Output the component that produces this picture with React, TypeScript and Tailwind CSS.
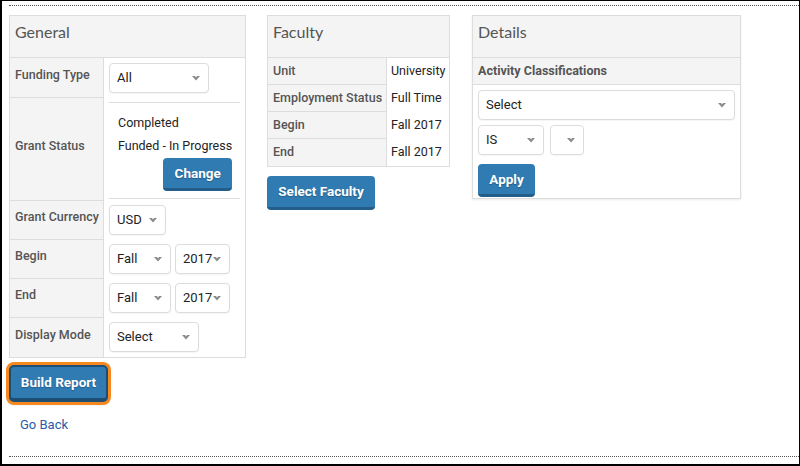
import * as React from "react";

const labelCls =
	"bg-[#f4f4f4] border-r border-[#ddd] pl-[5px] pb-[5px] flex items-center text-[12.5px] font-medium text-[#555]";

function Arrow() {
	return (
		<svg width="8" height="5" viewBox="0 0 8 5" className="shrink-0">
			<path d="M0 0 L4 4.5 L8 0 L5 0 L4 1.5 L3 0 Z" fill="#8a8a8a" />
		</svg>
	);
}

function Select({ label, className }: { label?: string; className: string }) {
	return (
		<div
			className={`flex items-center justify-between h-[30px] border border-[#dcdcdc] rounded-[4px] bg-white pl-[7px] pr-[8px] text-[13px] text-[#222] shadow-[0_1px_1px_rgba(0,0,0,0.04)] ${className}`}
		>
			<span>{label ?? ""}</span>
			<Arrow />
		</div>
	);
}

function BlueButton({ children, className }: { children: React.ReactNode; className: string }) {
	return (
		<button
			className={`bg-[#2f7bb2] border-b-[3px] border-[#235e8a] rounded-[4px] text-white font-bold text-[13.5px] [text-shadow:0_1px_1px_rgba(0,0,0,0.25)] flex items-center justify-center ${className}`}
		>
			{children}
		</button>
	);
}

function PanelHeader({ title }: { title: string }) {
	return (
		<div className="h-[42px] bg-[#f4f4f4] border-b border-[#ddd] pl-[5px] pt-[4px] text-[16px] text-[#555] font-['Lato',sans-serif]">
			{title}
		</div>
	);
}

function GeneralPanel() {
	return (
		<div className="w-[237px] border border-[#ddd] bg-white">
			<PanelHeader title="General" />
			<div className="grid grid-cols-[94px_1fr]">
				<div className={`${labelCls} h-[40px] border-b`}>Funding Type</div>
				<div className="pt-[5px] pl-[5px]">
					<Select label="All" className="w-[100px]" />
				</div>

				<div className={`${labelCls} h-[103px] border-b`}>Grant Status</div>
				<div className="pt-[4px] px-[5px]">
					<div className="border-y border-[#ddd] pt-[8px] pb-[7px] pl-[9px] pr-[8px] text-[12.5px] text-[#222] whitespace-nowrap">
						<div className="leading-[23px]">Completed</div>
						<div className="leading-[23px]">Funded - In Progress</div>
						<div className="flex justify-end mt-[1px]">
							<BlueButton className="w-[69px] h-[33px]">Change</BlueButton>
						</div>
					</div>
				</div>

				<div className={`${labelCls} h-[39px] border-b`}>Grant Currency</div>
				<div className="pt-[4px] pl-[5px]">
					<Select label="USD" className="w-[57px]" />
				</div>

				<div className={`${labelCls} h-[39px] border-b`}>Begin</div>
				<div className="pt-[4px] pl-[5px] flex gap-[4px]">
					<Select label="Fall" className="w-[62px]" />
					<Select label="2017" className="w-[55px]" />
				</div>

				<div className={`${labelCls} h-[39px] border-b`}>End</div>
				<div className="pt-[4px] pl-[5px] flex gap-[4px]">
					<Select label="Fall" className="w-[62px]" />
					<Select label="2017" className="w-[55px]" />
				</div>

				<div className={`${labelCls} h-[39px]`}>Display Mode</div>
				<div className="pt-[4px] pl-[5px]">
					<Select label="Select" className="w-[90px]" />
				</div>
			</div>
		</div>
	);
}

const facultyRows = [
	{ label: "Unit", value: "University" },
	{ label: "Employment Status", value: "Full Time" },
	{ label: "Begin", value: "Fall 2017" },
	{ label: "End", value: "Fall 2017" },
];

function FacultyPanel() {
	return (
		<div className="flex flex-col">
			<div className="w-[183px] border border-[#ddd] bg-white">
				<PanelHeader title="Faculty" />
				<div className="grid grid-cols-[119px_1fr]">
					{facultyRows.map((row, i) => (
						<React.Fragment key={row.label}>
							<div
								className={`bg-[#f4f4f4] border-r border-[#ddd] pl-[5px] h-[27px] flex items-center text-[12.5px] font-medium text-[#555] ${
									i < facultyRows.length - 1 ? "border-b" : ""
								}`}
							>
								{row.label}
							</div>
							<div className="pl-[4px] flex items-center text-[12.5px] text-[#222] whitespace-nowrap">
								{row.value}
							</div>
						</React.Fragment>
					))}
				</div>
			</div>
			<BlueButton className="mt-[9px] w-[108px] h-[34px]">Select Faculty</BlueButton>
		</div>
	);
}

function DetailsPanel() {
	return (
		<div className="w-[269px] border border-[#ddd] bg-white shadow-[0_1px_2px_rgba(0,0,0,0.08)]">
			<PanelHeader title="Details" />
			<div className="h-[27px] bg-[#f4f4f4] border-b border-[#ddd] pl-[5px] flex items-center text-[12.5px] font-bold text-[#555]">
				Activity Classifications
			</div>
			<div className="px-[5px] pt-[5px] pb-[1px]">
				<Select label="Select" className="w-full" />
				<div className="flex gap-[6px] mt-[5px]">
					<Select label="IS" className="w-[66px]" />
					<Select className="w-[34px]" />
				</div>
				<BlueButton className="mt-[9px] w-[57px] h-[33px]">Apply</BlueButton>
			</div>
		</div>
	);
}

export default function App() {
	return (
		<div className="w-[800px] h-[466px] border-2 border-black border-t-[1px] border-r-[1px] bg-white flex flex-col font-['Roboto',sans-serif]">
			<div className="flex-1 ml-[7px] mt-[4px] mb-[7px] border-y border-dotted border-[#555] pt-[9px]">
				<div className="flex items-start">
					<div className="flex flex-col items-start">
						<GeneralPanel />
						<button className="mt-[8px] ml-[1px] w-[97px] h-[35px] bg-[#2f7bb2] border border-[#1d4f75] border-b-[3px] rounded-[4px] text-white font-bold text-[13.5px] [text-shadow:0_1px_1px_rgba(0,0,0,0.25)] ring-[3px] ring-offset-[1px] ring-offset-[#1d4f75] ring-[#f5891f] shadow-[0_2px_4px_rgba(0,0,0,0.3)]">
							Build Report
						</button>
						<a className="mt-[14px] ml-[11px] text-[13px] text-[#2a5ca8]">Go Back</a>
					</div>
					<div className="ml-[21px]">
						<FacultyPanel />
					</div>
					<div className="ml-[22px]">
						<DetailsPanel />
					</div>
				</div>
			</div>
		</div>
	);
}
